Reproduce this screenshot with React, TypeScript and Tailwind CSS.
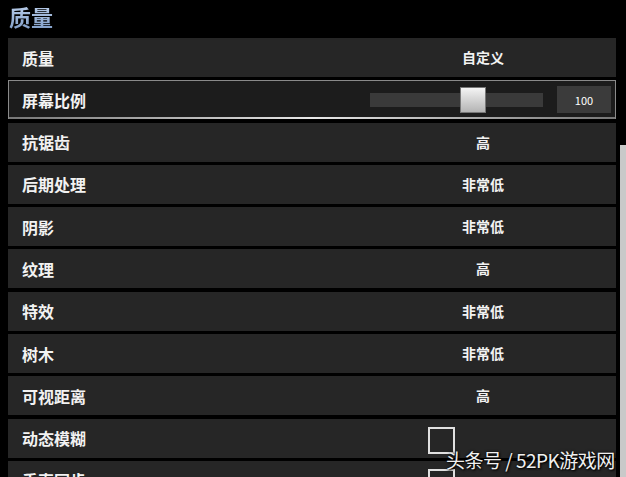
import React from "react";

const rows: { label: string; value?: string; kind?: "slider" | "check" }[] = [
  { label: "质量", value: "自定义" },
  { label: "屏幕比例", kind: "slider" },
  { label: "抗锯齿", value: "高" },
  { label: "后期处理", value: "非常低" },
  { label: "阴影", value: "非常低" },
  { label: "纹理", value: "高" },
  { label: "特效", value: "非常低" },
  { label: "树木", value: "非常低" },
  { label: "可视距离", value: "高" },
  { label: "动态模糊", kind: "check" },
  { label: "垂直同步", kind: "check" },
];

const font = { fontFamily: '"Noto Sans CJK SC", "Noto Sans", sans-serif' };

export default function App() {
  return (
    <div className="relative w-[626px] h-[477px] overflow-hidden bg-black" style={font}>
      <div className="pl-[9px] h-[38px]">
        <span className="text-[22px] font-bold leading-[33px] text-transparent bg-clip-text bg-gradient-to-b from-[#c4d6ef] to-[#7d9bc6]">
          质量
        </span>
      </div>
      <div className="flex flex-col gap-[3.3px] pl-[8px] w-[616px]">
        {rows.map((r, i) =>
          r.kind === "slider" ? (
            <div
              key={i}
              className="relative flex items-center h-[39px] bg-[#1c1c1c] border border-[#8a8a8a]"
            >
              <span className="pl-[13px] text-[16px] font-bold text-[#f2f2f2]">{r.label}</span>
              <div className="ml-auto flex items-center">
                <div className="relative w-[173px] h-[14px] bg-[#3a3a3a]">
                  <div className="absolute left-[90px] top-[-6px] w-[26px] h-[26px] bg-gradient-to-b from-[#f4f4f4] to-[#b4b4b4] border border-[#777]" />
                </div>
                <div className="ml-[14px] mr-[4px] w-[54px] h-[27px] bg-[#3b3b3b] flex items-center justify-center text-[11px] text-white">
                  100
                </div>
              </div>
              <div className="absolute left-0 right-0 bottom-[-1px] h-[2px] bg-gradient-to-r from-[#777] via-[#e8e8e8] to-[#777]" />
            </div>
          ) : (
            <div key={i} className="relative flex items-center h-[39px] bg-[#262626]">
              <span className="pl-[14px] text-[16px] font-bold text-[#f2f2f2]">{r.label}</span>
              {r.value && (
                <span className="absolute left-[475px] -translate-x-1/2 text-[14px] font-bold text-[#f2f2f2]">
                  {r.value}
                </span>
              )}
              {r.kind === "check" && (
                <div className="absolute left-[420px] top-[8px] w-[27px] h-[27px] border-2 border-[#e0e0e0]" />
              )}
            </div>
          )
        )}
      </div>
      <div className="absolute left-[620px] top-[145px] w-[6px] h-[340px] bg-[#c9c9c9]" />
      <div
        className="absolute left-[446px] top-[447px] text-[19px] leading-[26px] text-[#f0f0f0] tracking-[-0.5px]"
        style={{ textShadow: "0 0 3px #000, 1px 1px 2px #000" }}
      >
        头条号 / 52PK游戏网
      </div>
    </div>
  );
}
